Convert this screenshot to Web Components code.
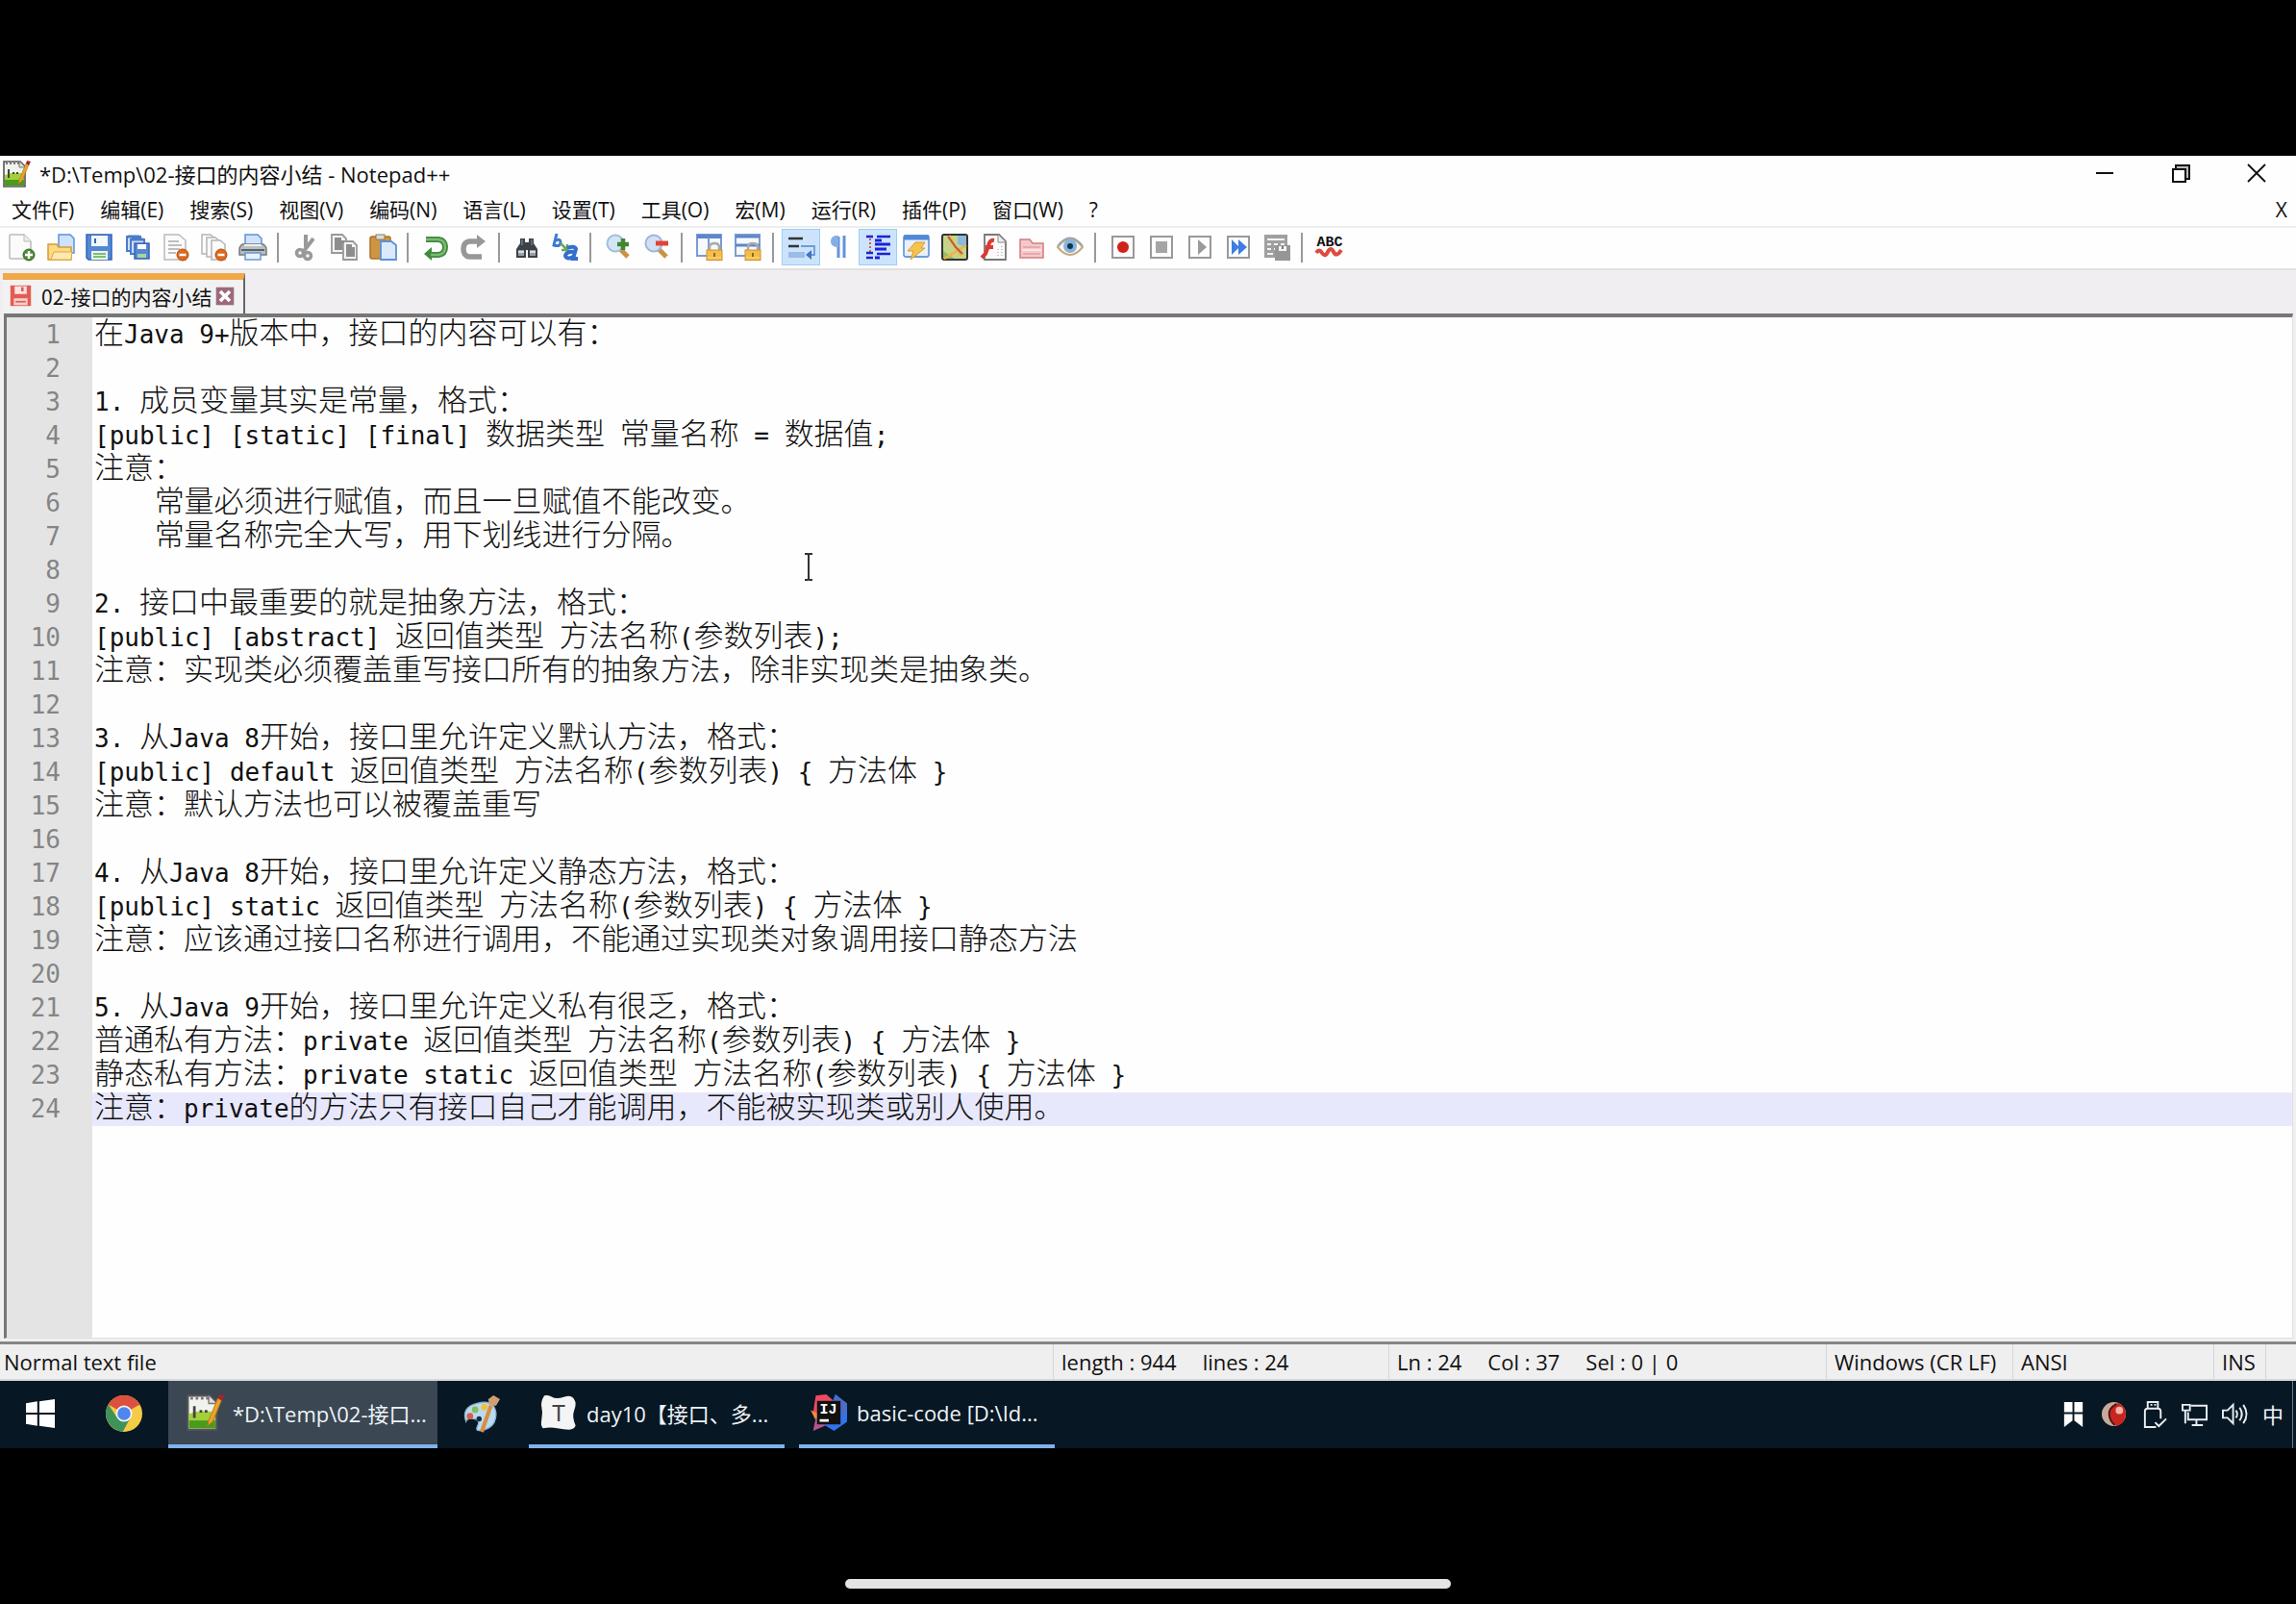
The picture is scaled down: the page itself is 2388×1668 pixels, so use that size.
<!DOCTYPE html>
<html lang="zh-CN">
<head>
<meta charset="utf-8">
<title>Notepad++</title>
<style>
    html, body {
        margin: 0;
        background: #000;
    }
    body {
        min-height: 100vh;
        display: flex;
        flex-direction: column;
        font-family: "Open Sans", "Noto Sans CJK SC", sans-serif;
        font-size: 22px;
        color: #111;
    }
</style>
</head>
<body>
<app-desktop>
    <title-bar>*D:\Temp\02-接口的内容小结 - Notepad++</title-bar>
    <menu-bar></menu-bar>
    <tool-bar></tool-bar>
    <tab-strip><file-tab>02-接口的内容小结</file-tab></tab-strip>
    <text-editor></text-editor>
    <status-bar></status-bar>
    <task-bar slot="taskbar"></task-bar>
</app-desktop>

<script>
const notepad = `
    <path d="M1 1h17l5 5v21H1z" fill="#f1f3ee" stroke="#555" stroke-width="1.6"/>
    <path d="M2 15q10-4 20-1v12H2z" fill="#a3cf3a"/><path d="M2 20h20v6H2z" fill="#4a9a1e"/>
    <path d="M3 3h14" stroke="#777" stroke-width="2" stroke-dasharray="2 2"/>
    <path d="M6 9v9M10 13h2m2 0h2" stroke="#444" stroke-width="2"/>
    <path d="M17 1v6h6" fill="#ddd" stroke="#777"/>
    <path d="M17 20l7-17 3 1-7 17-4 3z" fill="#e9a52c" stroke="#b87812" stroke-width=".7"/>
    <path d="M24 3l1-3 4 1-2 4z" fill="#a3262f"/>`

const minus = '<circle cx="21" cy="22" r="6" fill="#dd6a1e" stroke="#b04c0c"/><path d="M17.500 22h7" stroke="#fff" stroke-width="2.500"/>'
const lock = '<path d="M14 18v-4q0-4 5-4t5 4v4" fill="none" stroke="#aaa" stroke-width="2.500"/><rect x="11" y="17" width="16" height="10.500" fill="#f3bd4c" stroke="#cf932a"/><path d="M19 20v4" stroke="#8f6720" stroke-width="2"/><path d="M12 25h14" stroke="#fbdc8e"/>'
const box = '<rect x="3" y="3" width="22" height="22" fill="#fdfdfd" stroke="#999" stroke-width="2"/>'

const icons = {
    notepad,
    new: `<path d="M1 2q0-1 1-1h14l7 7v18H2q-1 0-1-1z" fill="#fbfbfb" stroke="#bbb" stroke-width="1.500"/><path d="M16 1v7h7" fill="#eee" stroke="#bbb"/>
        <circle cx="21" cy="22" r="6" fill="#4c8a35" stroke="#37682a"/><path d="M21 18v8M17 22h8" stroke="#fff" stroke-width="2.500"/>`,
    open: `<path d="M12 1h12l4 4v15H12z" fill="#cfe2fa" stroke="#5d92d8" stroke-width="1.500"/>
        <path d="M1 27V11h9l2 3h13v13z" fill="#fbdc86" stroke="#d89a35" stroke-width="1.500"/><path d="M4 27l3-8h19l-1 8z" fill="#fdeab0" stroke="#dfa544"/>`,
    save: `<path d="M1 1h26v26H3l-2-2z" fill="#5488d6" stroke="#3564b4" stroke-width="1.500"/><rect x="6" y="2" width="17" height="11" fill="#f3f7fc"/>
        <path d="M10 5v5" stroke="#3564b4" stroke-width="2"/><rect x="6" y="18" width="17" height="9" fill="#eef4ee"/><path d="M8 21h13M8 24h13" stroke="#7ec06f" stroke-width="2"/>`,
    saveAll: `<g fill="#cfdff5" stroke="#4a7bc9" stroke-width="2"><path d="M3 3h14v15H3z"/><path d="M7 6h14v15H7z"/></g>
        <path d="M11 10h15v16H11z" fill="#5488d6" stroke="#3564b4" stroke-width="1.500"/><path d="M14 11h9v5h-9z" fill="#fff"/><path d="M14 21h9v4h-9z" fill="#a9d49c"/><path d="M4 3h12M8 6h12" stroke="#4a7bc9" stroke-width="3"/>`,
    close: `<path d="M2 1h15l7 6v20H2z" fill="#fbfbfb" stroke="#bbb" stroke-width="1.500"/><path d="M6 8h11M6 12h14M6 16h12M6 20h8" stroke="#aaa" stroke-width="1.500"/>${minus}`,
    closeAll: `<g fill="#fbfbfb" stroke="#b5b5b5" stroke-width="1.500"><path d="M1 1h9l5 4v16H1z"/><path d="M6 4h9l5 4v16H6z"/><path d="M11 7h9l5 4v16H11z"/></g>${minus}`,
    print: `<path d="M6 13V1h13l4 4v8z" fill="#cfe2fa" stroke="#5d92d8" stroke-width="1.500"/><path d="M3 11h22q3 2 3 6v5H0v-5q0-4 3-6z" fill="#b9bec1" stroke="#777" stroke-width="1.500"/>
        <path d="M2 17h24" stroke="#566" stroke-width="2"/><path d="M5 12h18" stroke="#eee" stroke-width="2"/><path d="M6 20h16v7H6z" fill="#e9f1fb" stroke="#6a98d4" stroke-width="1.500"/>`,
    cut: '<path d="M14 1v13M22 5L12 18" stroke="#999" stroke-width="4" fill="none"/><g fill="none" stroke="#999" stroke-width="3.500"><circle cx="8" cy="20" r="3.500"/><circle cx="16" cy="23" r="3.500"/></g>',
    copy: `<g fill="#f4f4f4" stroke="#999" stroke-width="1.800"><path d="M1 1h11l4 4v15H1z"/><path d="M13 8h10l4 4v15H13z"/></g>
        <path d="M4 4h7v3h3v3h-2v7H4zM16 11h6v3h3v10h-9z" fill="#8d8d8d"/>`,
    paste: `<rect x="1" y="3" width="21" height="23" rx="2" fill="#cf9542" stroke="#a8732a" stroke-width="1.500"/><rect x="7" y="1" width="9" height="5" fill="#ddd" stroke="#8d7a5c"/>
        <path d="M12 8h11l5 4v15H12z" fill="#dce9fb" stroke="#5d92d8" stroke-width="1.800"/>`,
    undo: '<path d="M4 6h13q7 1 7 8t-7 8h-7" fill="none" stroke="#3f8a3f" stroke-width="6"/><path d="M10 14v14l-8-7z" fill="#3f8a3f"/><path d="M4 6h13q7 1 7 8t-7 8h-8" fill="none" stroke="#7cbb74" stroke-width="2.500"/>',
    redo: '<path d="M22 24H9q-6-1-6-8t6-8h8" fill="none" stroke="#979797" stroke-width="5.500"/><path d="M17 1v14l9-7z" fill="#979797"/>',
    find: `<path d="M7 5h5v4h4V5h5v5l4 6v9H15v-8h-2v8H3v-9l4-6z" fill="#3c4146"/><path d="M5 17h6v6H5zM17 17h6v6h-6z" fill="#99a1a8"/><path d="M5 19h6M17 19h6" stroke="#d7dde2" stroke-width="2"/><path d="M9 6v6M19 6v6" stroke="#8a9299"/>`,
    replace: `<g fill="none" stroke="#3c7bd0" stroke-width="3"><path d="M5 0l-3 12q7 2 7-3 0-4-5-2"/></g><path d="M9 10l6 6m1-5v6h-6" stroke="#6aa65d" stroke-width="2.500" fill="none"/>
        <g fill="none" stroke="#3270cd" stroke-width="4"><path d="M16 15q8-3 9 1l-3 10h5"/><path d="M24 19q-9-1-10 4 2 5 10 0"/></g>`,
    zoomIn: '<path d="M16 16l8 8" stroke="#c89446" stroke-width="5"/><circle cx="11" cy="10" r="8.500" fill="#d3e5f4" stroke="#a2bfdb" stroke-width="2"/><path d="M19 5v12M13 11h12" stroke="#43852f" stroke-width="4.500"/>',
    zoomOut: '<path d="M16 16l8 8" stroke="#c89446" stroke-width="5"/><circle cx="11" cy="10" r="8.500" fill="#d3e0f4" stroke="#a2b5db" stroke-width="2"/><path d="M13 10h13" stroke="#de4436" stroke-width="5"/>',
    syncV: `<path d="M1 1h25v22H1z" fill="#f6f9fd" stroke="#7d9bd0" stroke-width="2"/><path d="M1 3h25" stroke="#5e86cc" stroke-width="4"/><path d="M13 4v19" stroke="#7d9bd0" stroke-width="2"/>${lock}`,
    syncH: `<path d="M1 1h25v22H1z" fill="#f6f9fd" stroke="#7d9bd0" stroke-width="2"/><path d="M1 3h25M1 12h25" stroke="#5e86cc" stroke-width="3"/>${lock}`,
    wrap: '<path d="M1 5h15M1 13h11" stroke="#333" stroke-width="2.500"/><path d="M14 13h14v9h-6" stroke="#6e9ad8" stroke-width="1.800" fill="none"/><path d="M25 17v10l-6-5z" fill="#3f76c6"/><path d="M1 19h17v6H1z" fill="#9dbbe8"/>',
    pilcrow: '<path d="M19 2v23M13 3v22" stroke="#6294d8" stroke-width="3" fill="none"/><path d="M21 2H10q-5 1-5 6t6 6h2V2z" fill="#85aee6"/>',
    indent: `<path d="M2 3h7M2 20h7M2 25h7M13 3h14M13 21h14" stroke="#1b22d8" stroke-width="2.500"/><path d="M11 7h7M11 11h16M11 16h12M11 25h5" stroke="#1b22d8" stroke-width="3"/>
        <path d="M6 5v14" stroke="#d44" stroke-width="1.800" stroke-dasharray="2 2"/>`,
    lang: `<rect x="1" y="2" width="26" height="22" rx="2" fill="#e9f0fa" stroke="#6f9cdb" stroke-width="1.800"/><path d="M1 4h26" stroke="#5089d8" stroke-width="5"/><path d="M13 9h10l-4 6h4L8 27l3-9H5z" fill="#f5c44e" stroke="#d99e2a"/>`,
    map: `<rect x="1" y="1" width="26" height="26" rx="2" fill="#c6d487" stroke="#333" stroke-width="2"/><path d="M17 2h9v12l-9-3z" fill="#8db9dd"/><path d="M2 18l12 8H2z" fill="#93bd62"/>
        <path d="M8 2l7 12 6 9M26 12L3 26" stroke="#e9b44a" stroke-width="2.500" fill="none"/><path d="M7 3l8 11 7 7" stroke="#c4573f" stroke-width="2" fill="none"/>`,
    funcs: `<path d="M5 1h15l7 7v19H5z" fill="#fbfbfb" stroke="#777" stroke-width="1.800"/><path d="M19 1v8h8" fill="#eee" stroke="#888"/><path d="M15 7q-5-1-6 6l-3 8-4 4M6 14h8" stroke="#d93b33" stroke-width="4" fill="none"/><path d="M19 16v8M23 13v10" stroke="#999" stroke-dasharray="1 2"/>`,
    folder: '<path d="M2 25V6h10l3 4h11v15z" fill="#f5c9c9" stroke="#d27c80" stroke-width="1.500"/><path d="M5 14h18M5 21h18" stroke="#e9a9ac" stroke-width="2"/><path d="M4 17h20" stroke="#fbe6e6" stroke-width="2"/>',
    eye: '<path d="M1 14Q14-3 27 14 14 30 1 14z" fill="#f8f7f3" stroke="#c9a980" stroke-width="2"/><path d="M1 13Q14-4 27 13" stroke="#98a6b4" stroke-width="2" fill="none"/><circle cx="14" cy="13" r="7" fill="#87b4dc"/><circle cx="14" cy="13" r="3" fill="#16334e"/>',
    record: box + '<circle cx="14" cy="14" r="6" fill="#cf2318"/>',
    stop: box + '<rect x="8" y="8" width="12" height="12" fill="#a5a5a5"/>',
    play: box + '<path d="M12 6l9 8-9 8z" fill="#9a9a9a"/>',
    forward: box + '<path d="M7 6l8 8-8 8zM14 6l9 8-9 8z" fill="#3f7de0"/>',
    macroSave: `<path d="M1 1h24v24H1z" fill="#a0a0a0"/><path d="M4 6h18M4 11h4m3 0h4m3 0h4M4 16h4m3 0h4M4 21h6" stroke="#f4f4f4" stroke-width="2"/><path d="M12 12h16v16H12z" fill="#969696"/><path d="M16 13h8v5h-8z" fill="#f4f4f4"/><path d="M20 13v3" stroke="#777" stroke-width="2"/>`,
    spell: '<text x="14" y="13" text-anchor="middle" font-family="Liberation Mono" font-weight="700" font-size="15" fill="#111">ABC</text><path d="M0 20q3-5 6 0t6-1 6 0 8-2" stroke="#dc4b3e" stroke-width="4" fill="none"/>',
    redDisk: '<path d="M2 2h24v24H2z" fill="#e25d55"/><path d="M7 3h14v9H7z" fill="#fde6e4"/><path d="M16 4v5" stroke="#e25d55" stroke-width="3"/><path d="M6 17h16v8H6z" fill="#f9cfcb"/><path d="M8 21h12" stroke="#d4685f" stroke-width="2"/>',
    tabClose: '<rect x="1" y="1" width="26" height="26" fill="#9c6a7c"/><path d="M7 7l14 14M21 7L7 21" stroke="#fff" stroke-width="5"/>',
    minimize: '<path d="M5 13h18" stroke="#111" stroke-width="2"/>',
    restore: '<path d="M9 9V5h14v14h-4" fill="#bbb" stroke="#111" stroke-width="2"/><path d="M6 9h13v13H6z" fill="#fff" stroke="#111" stroke-width="2"/>',
    cross: '<path d="M5 4l18 18M23 4L5 22" stroke="#111" stroke-width="1.800"/>',
    start: '<path d="M0 4l11-2v11H0zM13 2l15-2v13H13zM0 15h11v11L0 24zM13 15h15v13l-15-2z" fill="#fff"/>',
    chrome: `<circle cx="14" cy="14" r="14" fill="#f6cb45"/><path d="M14 14L2 7Q6 0 14 0t12 7z" fill="#dc5040"/><path d="M2 7q-4 7 0 14 4 6 11 7l6-11-5-3-6 2z" fill="#3d9358"/>
        <path d="M2 7L26 7" stroke="#dc5040"/><circle cx="14" cy="14" r="6.300" fill="#f4f4f4"/><circle cx="14" cy="14" r="5" fill="#4c86ee"/>`,
    paint: `<path d="M2 20Q-2 9 11 6t14 8q0 12-13 13-3 0-1-4t-3-5-6 2z" fill="#b9daf0" stroke="#87b2cf"/><circle cx="5" cy="16" r="2.500" fill="#dd5a4b"/><circle cx="9" cy="11" r="2.500" fill="#85bd58"/><circle cx="16" cy="9" r="2.500" fill="#efc23c"/>
        <circle cx="12" cy="18" r="2" fill="#122c42"/><path d="M14 28l7-20" stroke="#d98e42" stroke-width="3"/><path d="M20 8l-1-5 4-3 5 3-3 5z" fill="#cf9f72"/>`,
    typora: '<path d="M3 1q3-1 6 1t9 0 8 2q2 3 0 8t1 12q-1 3-5 3t-9-1-11 0q-2-2-1-7t0-9 2-9z" fill="#f5f4f4"/><text x="14" y="21" text-anchor="middle" font-family="Noto Sans" font-size="18" fill="#444">T</text>',
    idea: `<path d="M4 1l8-1 7 6-8 12-9-4z" fill="#ee4a64"/><path d="M0 12l8 4-3 6z" fill="#ee8d36"/><path d="M2 28l2-10 12 4z" fill="#b55491"/><path d="M19 0l9 7v14l-10 7-8-5z" fill="#2f74e8"/><path d="M19 0l9 7-2 10-8-9z" fill="#506bc5"/>
        <rect x="5" y="5" width="18" height="18" fill="#111"/><text x="7" y="15" font-family="Liberation Mono" font-weight="700" font-size="11" fill="#fff">IJ</text><path d="M7 20h7" stroke="#fff" stroke-width="2"/>`,
    flag: '<path d="M4 1h9v11H4zM15 1h9v11h-9zM4 14h9v7l-9 7zM15 14h9v14l-9-7z" fill="#fff"/>',
    ball: '<circle cx="14" cy="14" r="13" fill="#c8a99a"/><path d="M27 14A13 13 0 0 1 17 27Q8 21 9 13T19 2q8 4 8 12z" fill="#c92520"/><path d="M17 3Q8 8 9 15t6 11" fill="none" stroke="#4d1612" stroke-width="2"/><circle cx="20" cy="10" r="4" fill="#f7b3a8"/>',
    usb: '<path d="M7 8V1h11v7M16 28H4V11q0-3 3-3h11q3 0 3 3v8" fill="none" stroke="#e9eef2" stroke-width="2"/><path d="M10 4h2m2 0h2" stroke="#e9eef2" stroke-width="2"/><path d="M15 23l4 4 8-8" fill="none" stroke="#e9eef2" stroke-width="2"/>',
    network: '<path d="M10 5h17v15H7V12" fill="none" stroke="#e9eef2" stroke-width="2"/><path d="M16 20v5M11 26h12M1 4h8v6H1zM4 10v14" fill="none" stroke="#e9eef2" stroke-width="2"/>',
    sound: '<path d="M1 10h5l6-6v20l-6-6H1z" fill="none" stroke="#e9eef2" stroke-width="2"/><path d="M15 10q3 4 0 8M19 7q5 7 0 14M23 4q7 10 0 20" fill="none" stroke="#e9eef2" stroke-width="2"/>',
    ibeam: '<path d="M10 1h3l1 1 1-1h3M14 2v25M10 28h3l1-1 1 1h3" fill="none" stroke="#333" stroke-width="2"/>'
}

// shared shadow root setup
class BaseElement extends HTMLElement {
    constructor() {
        super()
        this.attachShadow({mode: 'open'})
    }

    connectedCallback() {
        const template = document.createElement('template')
        template.innerHTML = `<style>
            button {
                margin: 0;
                padding: 0;
                border: 0;
                background: none;
                font: inherit;
                color: inherit;
                white-space: nowrap;
            }
            ${this.getStyles()}
        </style>${this.getTemplate()}`
        this.shadowRoot.replaceChildren(template.content.cloneNode(true))
    }
}

class AppIcon extends BaseElement {
    getTemplate() {
        return `<svg viewBox="0 0 28 28" aria-hidden="true">${icons[this.getAttribute('name')]}</svg>`
    }

    getStyles() {
        return `
            :host { display: block; flex: none; width: var(--icon, 28px); height: var(--icon, 28px); }
            svg { display: block; width: 100%; height: 100%; overflow: visible; }
        `
    }
}

class AppDesktop extends BaseElement {
    getTemplate() {
        return `
            <main><slot></slot></main>
            <slot name="taskbar"></slot>
            <footer><div class="home"></div></footer>
        `
    }

    getStyles() {
        return `
            :host { flex: 1; display: flex; flex-direction: column; padding-top: 162px; }
            main { flex: 1; display: flex; flex-direction: column; background: #fefefe; }
            footer { height: 162px; box-sizing: border-box; padding-bottom: 16px; display: flex; align-items: flex-end; justify-content: center; }
            .home { width: 630px; height: 10px; border-radius: 5px; background: #e4e4e4; }
        `
    }
}

class TitleBar extends BaseElement {
    getTemplate() {
        return `
            <app-icon name="notepad"></app-icon>
            <h1><slot></slot></h1>
            <button aria-label="最小化"><app-icon name="minimize"></app-icon></button>
            <button aria-label="还原"><app-icon name="restore"></app-icon></button>
            <button aria-label="关闭"><app-icon name="cross"></app-icon></button>
        `
    }

    getStyles() {
        return `
            :host { display: flex; align-items: center; height: 38px; padding: 0 2px 0 3px; }
            h1 { flex: 1; margin: 0 0 0 10px; font-size: 22px; font-weight: 400; line-height: 38px; }
            button { width: 79px; display: flex; justify-content: center; }
        `
    }
}

class MenuBar extends BaseElement {
    getTemplate() {
        const items = ['文件(F)', '编辑(E)', '搜索(S)', '视图(V)', '编码(N)', '语言(L)', '设置(T)', '工具(O)', '宏(M)', '运行(R)', '插件(P)', '窗口(W)', '?']
        return `
            <nav>${items.map(item => `<button>${item}</button>`).join('')}</nav>
            <button class="close">X</button>
        `
    }

    getStyles() {
        return `
            :host { display: flex; justify-content: space-between; height: 35px; padding: 0 9px 0 12px; border-bottom: 2px solid #ededed; font-size: 21px; }
            nav { display: flex; gap: 27px; }
            button { line-height: 37px; }
        `
    }
}

class ToolBar extends BaseElement {
    getTemplate() {
        const groups = [
            ['new', 'open', 'save', 'saveAll', 'close', 'closeAll', 'print'],
            ['cut', 'copy', 'paste'],
            ['undo', 'redo'],
            ['find', 'replace'],
            ['zoomIn', 'zoomOut'],
            ['syncV', 'syncH'],
            ['wrap', 'pilcrow', 'indent', 'lang', 'map', 'funcs', 'folder', 'eye'],
            ['record', 'stop', 'play', 'forward', 'macroSave'],
            ['spell']
        ]
        const pressed = ['wrap', 'indent']
        return groups.map(group => `<div>${group.map(name => `
            <button aria-label="${name}" aria-pressed="${pressed.includes(name)}"><app-icon name="${name}"></app-icon></button>
        `).join('')}</div>`).join('<hr>')
    }

    getStyles() {
        return `
            :host { display: flex; align-items: center; height: 40px; padding: 0 0 2px 3px; border-bottom: 2px solid #e2e1e2; }
            div { display: flex; }
            hr { width: 2px; height: 31px; margin: 0 8px 0 5px; border: 0; background: #999; }
            button { width: 40px; height: 38px; box-sizing: border-box; display: flex; align-items: center; justify-content: center; }
            button[aria-pressed="true"] { background: #cce4fb; border: 1px solid #9ccdf5; }
        `
    }
}

class TabStrip extends BaseElement {
    getTemplate() {
        return '<slot></slot>'
    }

    getStyles() {
        return `
            :host { display: flex; height: 42px; padding: 3px 0 0 3px; background: #f0eef0; }
        `
    }
}

class FileTab extends BaseElement {
    getTemplate() {
        return `
            <app-icon name="redDisk"></app-icon>
            <button class="name"><slot></slot></button>
            <button class="close" aria-label="关闭"><app-icon name="tabClose"></app-icon></button>
        `
    }

    getStyles() {
        return `
            :host {
                display: flex;
                align-items: center;
                padding: 0 9px 2px 6px;
                border-top: 7px solid #f0a848;
                border-right: 2px solid #666;
                background: #f3f2f3;
                font-family: "Noto Sans CJK SC", sans-serif;
                font-size: 21px;
                --icon: 25px;
            }
            .name { margin: 0 3px 0 9px; line-height: 32px; }
            .close { --icon: 20px; }
        `
    }
}

const lines = [
    '在Java 9+版本中，接口的内容可以有：',
    '',
    '1. 成员变量其实是常量，格式：',
    '[public] [static] [final] 数据类型 常量名称 = 数据值;',
    '注意：',
    '    常量必须进行赋值，而且一旦赋值不能改变。',
    '    常量名称完全大写，用下划线进行分隔。',
    '',
    '2. 接口中最重要的就是抽象方法，格式：',
    '[public] [abstract] 返回值类型 方法名称(参数列表);',
    '注意：实现类必须覆盖重写接口所有的抽象方法，除非实现类是抽象类。',
    '',
    '3. 从Java 8开始，接口里允许定义默认方法，格式：',
    '[public] default 返回值类型 方法名称(参数列表) { 方法体 }',
    '注意：默认方法也可以被覆盖重写',
    '',
    '4. 从Java 8开始，接口里允许定义静态方法，格式：',
    '[public] static 返回值类型 方法名称(参数列表) { 方法体 }',
    '注意：应该通过接口名称进行调用，不能通过实现类对象调用接口静态方法',
    '',
    '5. 从Java 9开始，接口里允许定义私有很乏，格式：',
    '普通私有方法：private 返回值类型 方法名称(参数列表) { 方法体 }',
    '静态私有方法：private static 返回值类型 方法名称(参数列表) { 方法体 }',
    '注意：private的方法只有接口自己才能调用，不能被实现类或别人使用。'
]

class TextEditor extends BaseElement {
    getTemplate() {
        // two latin columns make one chinese column
        const mark = line => line.replace(/[^\x00-\x7f]+/g, run => `<span>${run}</span>`)
        return `
            <div class="frame">
                <div class="gutter" aria-hidden="true">${lines.map((_, i) => `<div>${i + 1}</div>`).join('')}</div>
                <div class="code" role="textbox" aria-multiline="true" aria-label="02-接口的内容小结">
                    ${lines.map((line, i) => `<div class="line${i === lines.length - 1 ? ' current' : ''}">${mark(line)}</div>`).join('')}
                    <app-icon class="cursor" name="ibeam"></app-icon>
                </div>
            </div>
        `
    }

    getStyles() {
        return `
            :host { flex: 1; display: flex; padding: 0 3px 0 4px; background: #f0f0f0; border-bottom: 3px solid #858785; }
            .frame {
                flex: 1;
                display: flex;
                margin-bottom: 3px;
                border: 1px solid #e0e0e0;
                border-top: 4px solid #777;
                border-left: 3px solid #777;
                background: #fefefe;
                font-family: "DejaVu Sans Mono", monospace;
                font-size: 26px;
                line-height: 35px;
            }
            .gutter { width: 89px; box-sizing: border-box; padding: 1px 33px 0 0; background: #e4e4e4; color: #858585; text-align: right; }
            .code { flex: 1; padding-top: 1px; position: relative; }
            .line { height: 35px; padding-left: 2px; white-space: pre; }
            .line span { font-family: "Noto Sans CJK SC", sans-serif; font-size: 31px; font-weight: 300; line-height: 0; }
            .current { background: #e8e8fd; }
            .cursor { position: absolute; left: 731px; top: 245px; }
        `
    }
}

class StatusBar extends BaseElement {
    getTemplate() {
        return `
            <div class="type">Normal text file</div>
            <div class="size"><span>length : 944</span><span>lines : 24</span></div>
            <div class="position"><span>Ln : 24</span><span>Col : 37</span><span>Sel : 0 | 0</span></div>
            <div class="eol">Windows (CR LF)</div>
            <div class="encoding">ANSI</div>
            <div class="mode">INS</div>
            <div class="grip"></div>
        `
    }

    getStyles() {
        return `
            :host { display: flex; height: 36px; background: #f0eff0; border-bottom: 2px solid #d4d8da; }
            div { box-sizing: border-box; display: flex; gap: 27px; padding-left: 8px; border-left: 1px solid #d5d5d5; line-height: 36px; white-space: nowrap; }
            .type { flex: 1; padding-left: 4px; border: 0; }
            .size { width: 349px; }
            .position { width: 455px; }
            .eol { width: 194px; }
            .encoding { width: 209px; }
            .mode { width: 54px; }
            .grip { width: 32px; }
        `
    }
}

class TaskBar extends BaseElement {
    getTemplate() {
        return `
            <button class="start" aria-label="开始"><app-icon name="start"></app-icon></button>
            <button class="pin" aria-label="Chrome"><app-icon name="chrome"></app-icon></button>
            <button class="task active"><app-icon name="notepad"></app-icon>*D:\\Temp\\02-接口...</button>
            <button class="pin paint" aria-label="画图"><app-icon name="paint"></app-icon></button>
            <button class="task"><app-icon name="typora"></app-icon>day10【接口、多...</button>
            <button class="task"><app-icon name="idea"></app-icon>basic-code [D:\\Id...</button>
            <div class="tray">
                ${['flag', 'ball', 'usb', 'network', 'sound'].map(name => `<app-icon name="${name}"></app-icon>`).join('')}
                <span>中</span>
            </div>
        `
    }

    getStyles() {
        return `
            :host { display: flex; height: 70px; background: #071724; color: #eef3f7; --icon: 38px; }
            button { display: flex; align-items: center; padding-bottom: 2px; }
            .start { width: 83px; justify-content: center; --icon: 30px; }
            .pin { width: 92px; justify-content: center; }
            .paint { width: 76px; margin: 0 11px 0 8px; }
            .task { width: 266px; box-sizing: border-box; gap: 10px; padding: 0 0 0 12px; margin-right: 15px; border-bottom: 4px solid #7fb2ec; }
            .active { width: 280px; padding-left: 19px; margin-right: 0; background: #3b4753; }
            .tray { flex: 1; display: flex; align-items: center; justify-content: flex-end; gap: 15px; padding: 0 9px 2px 0; margin-right: 3px; border-right: 1px solid #6d7a85; --icon: 27px; }
        `
    }
}

customElements.define('app-icon', AppIcon)
customElements.define('app-desktop', AppDesktop)
customElements.define('title-bar', TitleBar)
customElements.define('menu-bar', MenuBar)
customElements.define('tool-bar', ToolBar)
customElements.define('tab-strip', TabStrip)
customElements.define('file-tab', FileTab)
customElements.define('text-editor', TextEditor)
customElements.define('status-bar', StatusBar)
customElements.define('task-bar', TaskBar)
</script>
</body>
</html>
